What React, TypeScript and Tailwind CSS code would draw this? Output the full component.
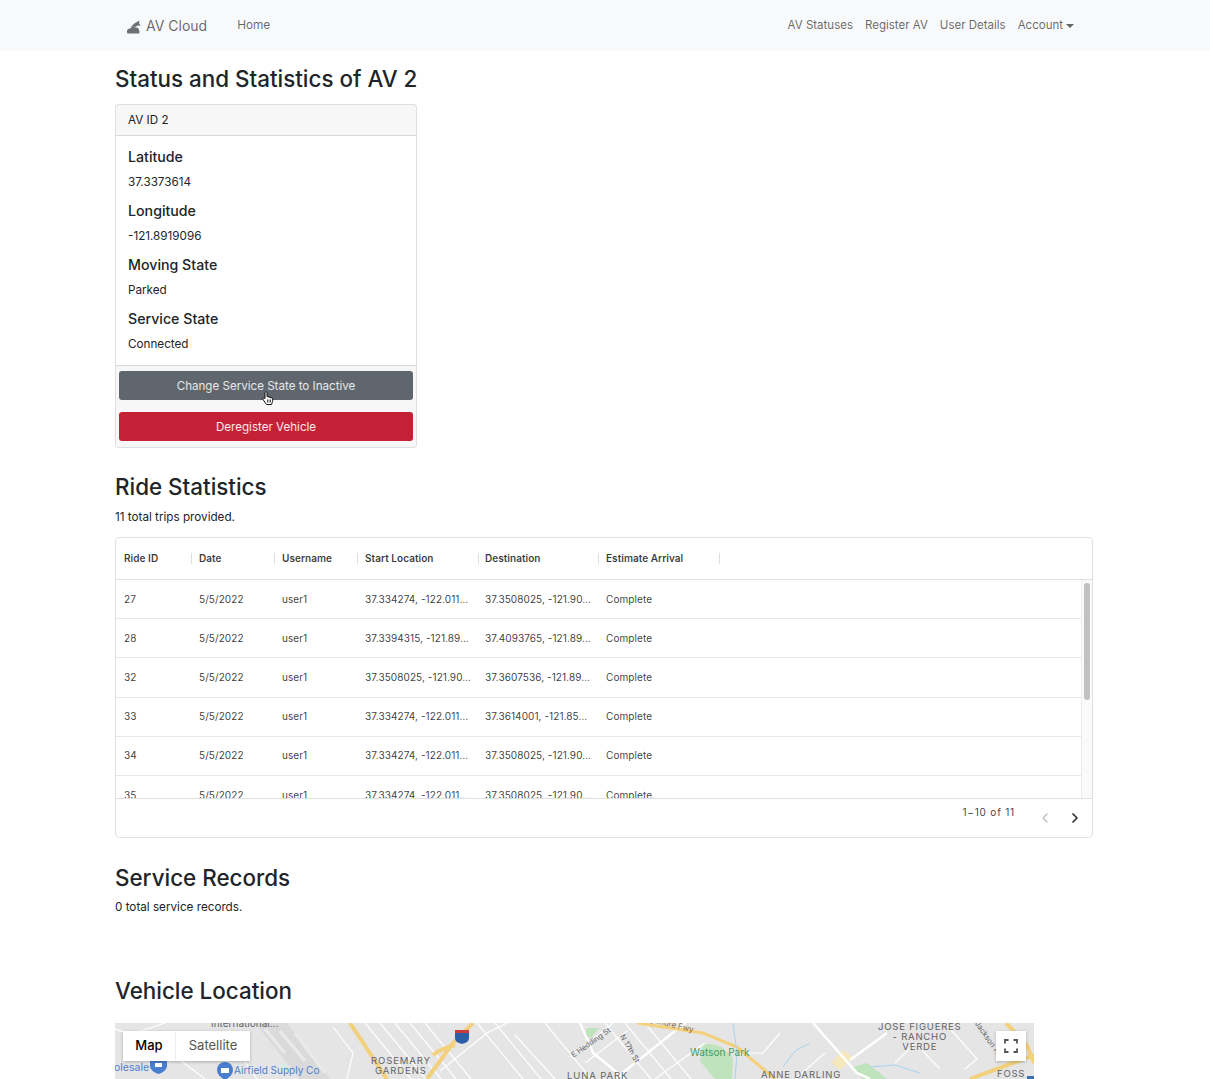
import { ChevronLeft, ChevronRight } from "lucide-react";

const RIDES = [
  ["27", "37.334274, -122.011…", "37.3508025, -121.90…"],
  ["28", "37.3394315, -121.89…", "37.4093765, -121.89…"],
  ["32", "37.3508025, -121.90…", "37.3607536, -121.89…"],
  ["33", "37.334274, -122.011…", "37.3614001, -121.85…"],
  ["34", "37.334274, -122.011…", "37.3508025, -121.90…"],
  ["35", "37.334274, -122.011…", "37.3508025, -121.90…"],
] as const;

const COLUMNS = [
  ["Ride ID", "w-[76px] pl-2"],
  ["Date", "w-[83px] pl-[7px]"],
  ["Username", "w-[83px] pl-[7px]"],
  ["Start Location", "w-[121px] pl-[7px]"],
  ["Destination", "w-[120px] pl-[6px]"],
  ["Estimate Arrival", "w-[121px] pl-[7px]"],
] as const;

const STATS = [
  ["Latitude", "37.3373614"],
  ["Longitude", "-121.8919096"],
  ["Moving State", "Parked"],
  ["Service State", "Connected"],
] as const;

const MAP_LABELS = [
  ["left-[96px] top-[-7px] text-[#5f6368] text-[10px]", "International..."],
  ["left-[-1px] top-[37px] text-[#4a7fd0] text-[10.5px]", "olesale"],
  ["left-[119px] top-[40px] text-[#4a7fd0] text-[10px]", "Airfield Supply Co"],
  ["left-[256px] top-[33px] text-[#5f6368] text-[9.5px] tracking-[0.9px] leading-[10px] text-center", "ROSEMARY\nGARDENS"],
  ["left-[452px] top-[46px] text-[#5f6368] text-[9.5px] tracking-[0.9px]", "LUNA PARK"],
  ["left-[575px] top-[22px] text-[#3f9b62] text-[10px]", "Watson Park"],
  ["left-[646px] top-[45px] text-[#5f6368] text-[9.5px] tracking-[0.8px]", "ANNE DARLING"],
  ["left-[763px] top-[-1px] text-[#5f6368] text-[9.5px] tracking-[0.8px] leading-[10px] text-center", "JOSE FIGUERES\n- RANCHO\nVERDE"],
  ["left-[882px] top-[44px] text-[#5f6368] text-[9.5px] tracking-[0.8px]", "FOSS"],
  ["left-[453px] top-[14px] -rotate-[35deg] text-[#5f6368] text-[7.5px]", "E Hedding St"],
  ["left-[499px] top-[20px] rotate-[60deg] text-[#5f6368] text-[7.5px]", "N 17th St"],
  ["left-[526px] top-[-6px] rotate-[14deg] text-[#8a6a3a] text-[8px]", "Bayshore Fwy"],
  ["left-[852px] top-[12px] rotate-[55deg] text-[#5f6368] text-[7.5px]", "Jackson Ave"],
] as const;

function MapRoads() {
  return (
    <svg className="absolute left-0 top-0 h-[56px] w-[919px]" viewBox="0 0 919 56" fill="none" aria-hidden>
      <g fill="#dadada">
        <path d="M140 0 L172 0 L215 56 L185 56 Z" />
      </g>
      <g stroke="#e9e9e9" strokeWidth="3.5">
        <path d="M150 6 L170 30" />
        <path d="M165 8 L190 38" />
        <path d="M180 10 L210 50" />
      </g>
      <g fill="#bfe3bd">
        <path d="M472 5 L484 5 L476 15 L470 12 Z" />
        <path d="M588 22 C600 18 612 26 618 36 L617 56 L600 56 L585 38 Z" />
        <path d="M738 44 L752 40 L772 56 L748 56 Z" />
      </g>
      <path d="M716 40 L728 27 L738 34 L725 47 Z" fill="#f5e8bd" />
      <g stroke="#ffffff" strokeWidth="1.2">
        <path d="M0 6 L45 22 L90 56" />
        <path d="M50 0 L20 10" />
        <path d="M120 24 L142 56" />
        <path d="M218 4 L238 30 L232 56" />
        <path d="M250 0 L296 56" />
        <path d="M265 0 L311 56" />
        <path d="M280 0 L326 56" />
        <path d="M295 0 L341 56" />
        <path d="M310 0 L356 56" />
        <path d="M325 48 L372 10 L392 0" />
        <path d="M362 0 L408 56" />
        <path d="M380 0 L426 56" />
        <path d="M400 12 L440 56" />
        <path d="M430 0 L476 56" />
        <path d="M455 34 L498 0" />
        <path d="M470 40 L512 8" />
        <path d="M490 0 L536 56" />
        <path d="M510 0 L556 56" />
        <path d="M530 0 L576 56" />
        <path d="M540 56 L590 20" />
        <path d="M620 30 L648 30 L665 10" />
        <path d="M680 56 L710 30" />
        <path d="M780 40 L800 20 L825 46" />
        <path d="M830 0 L862 36 L850 46" />
      </g>
      <g stroke="#ffffff" strokeWidth="2.5">
        <path d="M465 0 L478 30 L510 56" />
        <path d="M500 56 L570 0" />
        <path d="M698 0 L742 50 L755 56" />
        <path d="M735 37 L772 10" />
      </g>
      <g stroke="#f3d07c" strokeWidth="4">
        <path d="M235 0 L272 56" />
        <path d="M358 0 L338 20 L312 56" />
        <path d="M318 32 C326 26 332 24 340 22" />
        <path d="M522 0 L588 10 L622 24 L660 56" strokeWidth="3" />
        <path d="M855 56 L919 32" />
        <path d="M891 0 L912 22 L919 40" />
      </g>
      <g stroke="#a9d3ee" strokeWidth="1">
        <path d="M618 0 L622 30 L620 56" />
        <path d="M668 44 L680 28 L695 20" />
        <path d="M755 44 L780 42 L805 50" />
      </g>
      <g fill="#4a7fd0">
        <path d="M35 37 H52 V43 C52 47 47 50 43.5 51 C40 50 35 47 35 43 Z" />
        <circle cx="110" cy="47" r="8" />
        <path d="M104 52 L110 58 L116 52 Z" />
      </g>
      <rect x="40" y="40" width="7" height="4" fill="#ffffff" />
      <rect x="106" y="45" width="8" height="5" fill="#ffffff" />
      <path d="M340 7 H354 V15 C354 19 350 20 347 21 C344 20 340 19 340 15 Z" fill="#2d5fa8" />
      <rect x="340" y="7" width="14" height="3" fill="#c63b3b" />
      <rect x="912" y="53" width="7" height="3" fill="#3a6fb0" />
    </svg>
  );
}

export default function App() {
  return (
    <div className="h-[1079px] overflow-hidden bg-white font-['Inter',sans-serif] text-[#212529]">
      <nav className="flex h-[51px] items-center bg-[#f8f9fa] pl-[127px] pr-[136px] text-[#00000099]">
        <svg viewBox="0 0 16 14" className="mr-[4px] mt-[2px] h-[14px] w-[15px]" fill="#6c7075" aria-hidden>
          <path d="M0.5 14 C-1 11 1 8.2 3.5 8.8 C4.5 6 7.8 6 8.8 7.8 C11.5 6.8 14 9.5 13 14 Z" />
          <path d="M4 7.5 C6 4 10 1.5 13.5 0 C12.5 2 12.5 3.5 15.5 6 C12.5 5 10.5 5.5 9 7.2 C7.5 6 5.5 6.3 4 7.5 Z" />
        </svg>
        <span className="text-[14px] leading-6">AV Cloud</span>
        <span className="ml-[30px] text-[11.8px]">Home</span>
        <div className="ml-auto flex items-center gap-[12px] text-[11.5px]">
          <span>AV Statuses</span>
          <span>Register AV</span>
          <span>User Details</span>
          <span className="flex items-center">
            Account
            <span className="ml-[3px] h-0 w-0 border-x-[4px] border-t-[4px] border-x-transparent border-t-[#00000099]" />
          </span>
        </div>
      </nav>

      <main className="ml-[115px] w-[978px]">
        <h2 className="mt-[13px] text-[22.4px] font-medium leading-[29px]">Status and Statistics of AV 2</h2>

        <section className="mt-[11px] w-[302px] rounded-[4px] border border-[#00000020] bg-white">
          <div className="flex h-[31px] items-center border-b border-[#00000020] bg-[#00000008] px-3 pt-px text-[11.7px]">AV ID 2</div>
          <div className="h-[229px] px-3 pt-[11px]">
            {STATS.map(([label, value]) => (
              <div key={label} className="h-[54px]">
                <h5 className="text-[14.2px] font-medium leading-[20px]">{label}</h5>
                <p className="mt-[6px] text-[11.7px] leading-[18px]">{value}</p>
              </div>
            ))}
          </div>
          <div className="flex h-[82px] flex-col gap-[12px] rounded-b-[4px] border-t border-[#00000020] bg-[#00000008] px-[3px] pt-[5px]">
            <div className="relative flex h-[29px] items-center justify-center rounded-[3px] bg-[#5f666d] pt-[2px] text-[11.6px] text-white/85">
              Change Service State to Inactive
              <svg viewBox="0 0 12 14" className="absolute left-[143px] top-[20px] h-[15px] w-[12px]" aria-hidden>
                <path d="M3 1 C3 0 5 0 5 1 L5 5 L9 6 C11 6.5 11 8 10.5 10 L9.5 13 L4.5 13 L1 8 C0.5 7 2 6 3 7 Z" fill="#fff" stroke="#111" strokeWidth="1" />
                <path d="M5.5 8 V11 M7 8 V11 M8.5 8 V11" stroke="#111" strokeWidth="0.7" />
              </svg>
            </div>
            <div className="flex h-[29px] items-center justify-center rounded-[3px] bg-[#c42136] pt-[2px] text-[11.6px] text-white/90">Deregister Vehicle</div>
          </div>
        </section>

        <h2 className="mt-[24px] text-[22.4px] font-medium leading-[29px]">Ride Statistics</h2>
        <p className="mt-[7px] text-[11.7px] leading-[18px]">11 total trips provided.</p>

        <section className="mt-[11px] h-[301px] w-[978px] overflow-hidden rounded-[4px] border border-[#e0e0e0]">
          <div className="flex h-[42px] items-center border-b border-[#e0e0e0]">
            {COLUMNS.map(([name, width]) => (
              <div key={name} className={`${width} flex h-[11px] items-center justify-between`}>
                <span className="text-[10px] font-semibold tracking-[0.05px] text-[#000000c8]">{name}</span>
                <span className="h-[11px] w-px bg-[#e0e0e0]" />
              </div>
            ))}
          </div>
          <div className="flex h-[218px]">
            <div className="h-full w-[965px] overflow-hidden">
              {RIDES.map(([id, start, dest]) => (
                <div key={id} className="flex h-[39.2px] shrink-0 items-center border-b border-[#e6e6e6] text-[10px] tracking-[0.08px] text-[#000000c8]">
                  <span className="w-[76px] pl-2">{id}</span>
                  <span className="w-[83px] pl-[7px]">5/5/2022</span>
                  <span className="w-[83px] pl-[7px]">user1</span>
                  <span className="w-[121px] whitespace-nowrap pl-[7px]">{start}</span>
                  <span className="w-[120px] whitespace-nowrap pl-[6px]">{dest}</span>
                  <span className="w-[121px] pl-[7px]">Complete</span>
                </div>
              ))}
            </div>
            <div className="w-[11px] border-l border-[#ececec] bg-[#fafafa] pl-[2px] pt-[3px]">
              <div className="h-[117px] w-[6px] rounded-[3px] bg-[#c1c1c1]" />
            </div>
          </div>
          <div className="flex h-[39px] items-start border-t border-[#e0e0e0]">
            <span className="ml-auto mt-[7px] text-[10px] leading-[13px] tracking-[0.8px] text-[#000000c8]">1−10 of 11</span>
            <ChevronLeft className="ml-[22px] mt-[11px] h-[16px] w-[16px] text-[#00000042]" strokeWidth={2} />
            <ChevronRight className="ml-[14px] mr-[9px] mt-[11px] h-[16px] w-[16px] text-[#000000d0]" strokeWidth={2.6} />
          </div>
        </section>

        <h2 className="mt-[25px] text-[22.4px] font-medium leading-[29px]">Service Records</h2>
        <p className="mt-[6px] text-[11.7px] leading-[18px]">0 total service records.</p>

        <h2 className="mt-[60px] text-[22.4px] font-medium leading-[29px]">Vehicle Location</h2>

        <div className="relative mt-[18px] h-[400px] w-[919px] overflow-hidden bg-[#e5e5e5]">
          <MapRoads />
          {MAP_LABELS.map(([pos, text]) => (
            <span key={text} className={`absolute whitespace-pre ${pos}`}>
              {text}
            </span>
          ))}
          <div className="absolute left-[8px] top-[8px] flex h-[30px] bg-white text-[13px] shadow-[0_1px_3px_rgba(0,0,0,0.25)]">
            <span className="flex w-[52px] items-center justify-center font-medium text-black">Map</span>
            <span className="flex w-[75px] items-center justify-center border-l border-[#eeeeee] text-[#565656]">Satellite</span>
          </div>
          <div className="absolute left-[881px] top-[8px] flex h-[30px] w-[30px] items-center justify-center bg-white shadow-[0_1px_3px_rgba(0,0,0,0.25)]">
            <svg viewBox="0 0 14 14" className="h-[14px] w-[14px]" fill="none" stroke="#555" strokeWidth="1.8" aria-hidden>
              <path d="M1 4.5 V1 H4.5 M9.5 1 H13 V4.5 M13 9.5 V13 H9.5 M4.5 13 H1 V9.5" />
            </svg>
          </div>
        </div>
      </main>
    </div>
  );
}
